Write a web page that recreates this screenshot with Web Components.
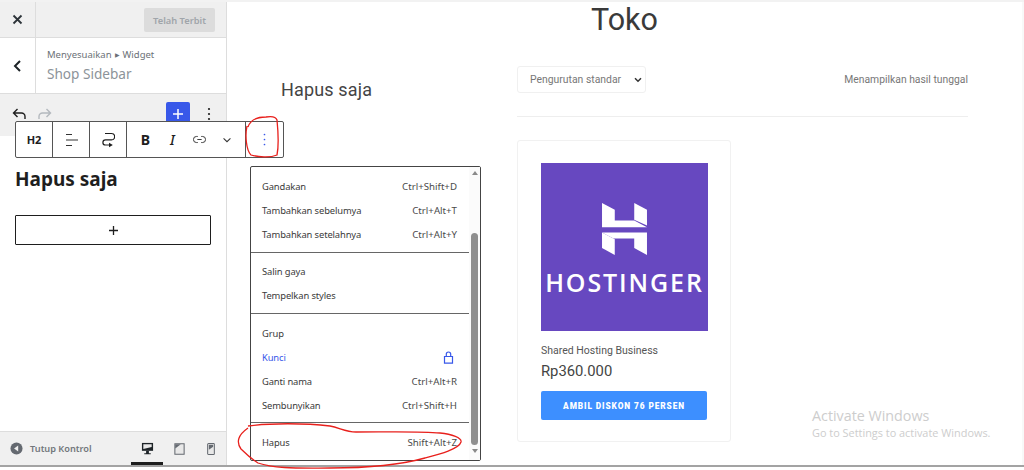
<!DOCTYPE html>
<html>
<head>
<meta charset="utf-8">
<style>
  html, body { margin: 0; height: 470px; overflow: hidden; background: #fff; }
</style>
</head>
<body>
<customizer-app></customizer-app>
<script>
const barTemplate = document.createElement('template');
barTemplate.innerHTML = `
  <style>
    :host { display: flex; width: 227px; flex: none; flex-direction: column; background: #fff; border-right: 1px solid #ddd; box-sizing: border-box; font-family: "Noto Sans", sans-serif; color: #1e1e1e; }
    .top { height: 35px; display: flex; background: #f0f0f0; border-bottom: 1px solid #ddd; flex: none; }
    .close { width: 35px; display: flex; align-items: center; justify-content: center; border-right: 1px solid #ddd; }
    .publish { margin: 6px 11px 0 auto; width: 71px; height: 24px; border-radius: 2px; background: #dcdcdc; color: #a0a5aa; font-size: 9.3px; font-weight: 600; display: flex; align-items: center; justify-content: center; }
    .panel { height: 55px; display: flex; border-bottom: 1px solid #ddd; flex: none; }
    .back { width: 35px; display: flex; align-items: center; justify-content: center; border-right: 1px solid #ddd; }
    .crumbs { padding: 9px 0 0 11px; font-size: 9.5px; color: #6b7177; line-height: 15px; }
    .crumbs b { font-weight: 400; font-size: 6px; margin: 0 3px; vertical-align: 1px; }
    .crumbs div { font-size: 13.6px; color: #8c9399; line-height: 20px; margin-top: 1px; }
    .tools { height: 42px; background: #f0f0f0; display: flex; align-items: flex-start; padding: 8px 0 0 11px; box-sizing: border-box; flex: none; }
    .tools svg { display: block; }
    .add { width: 24px; height: 24px; margin: 0 0 0 113px; border-radius: 2px; background: #3858e9; display: flex; align-items: center; justify-content: center; }
    .content { flex: 1; padding: 30px 15px 0 15px; }
    h2 { margin: 0; font-size: 19px; line-height: 26px; font-weight: 700; color: #1e1e1e; }
    .appender { margin-top: 23px; height: 30px; box-sizing: border-box; border: 1px solid #1e1e1e; display: flex; align-items: center; justify-content: center; border-radius: 1px; }
    .foot { height: 34px; flex: none; background: #f0f0f0; border-top: 1px solid #ddd; box-sizing: border-box; display: flex; align-items: center; font-size: 9.2px; font-weight: 600; color: #72777c; padding-left: 10px; }
    .foot span { margin-left: 7px; }
    .dev { width: 32px; height: 100%; display: flex; align-items: center; justify-content: center; box-sizing: border-box; border-bottom: 3px solid transparent; padding-top: 3px; }
    .dev.on { border-bottom-color: #1e1e1e; }
    .devs { margin-left: auto; margin-right: -1px; display: flex; height: 100%; }
  </style>
  <div class="top">
    <div class="close"><svg width="11" height="11" viewBox="0 0 11 11"><path d="M1.5 1.5l8 8M9.5 1.5l-8 8" stroke="#2c3338" stroke-width="1.8"/></svg></div>
    <div class="publish">Telah Terbit</div>
  </div>
  <div class="panel">
    <div class="back"><svg width="9" height="12" viewBox="0 0 9 12"><path d="M7 1L2 6l5 5" fill="none" stroke="#1d2327" stroke-width="2"/></svg></div>
    <div class="crumbs">Menyesuaikan<b>&#9654;</b>Widget<div>Shop Sidebar</div></div>
  </div>
  <div class="tools">
    <svg width="16" height="24" viewBox="0 0 16 24"><path d="M3 11h7.5a3.5 3.5 0 0 1 3.5 3.5V17M6.5 7L2.5 11l4 4" fill="none" stroke="#1e1e1e" stroke-width="1.4"/></svg>
    <svg style="margin-left:10px" width="16" height="24" viewBox="0 0 16 24"><path d="M13 11H5.5A3.5 3.5 0 0 0 2 14.5V17M9.5 7l4 4-4 4" fill="none" stroke="#b4b9be" stroke-width="1.4"/></svg>
    <div class="add"><svg width="12" height="12" viewBox="0 0 12 12"><path d="M6 1v10M1 6h10" stroke="#fff" stroke-width="1.5"/></svg></div>
    <svg style="margin:0 0 0 17px" width="4" height="24" viewBox="0 0 4 24"><circle cx="2" cy="7" r="1.1" fill="#1e1e1e"/><circle cx="2" cy="12" r="1.1" fill="#1e1e1e"/><circle cx="2" cy="17" r="1.1" fill="#1e1e1e"/></svg>
  </div>
  <div class="content">
    <h2>Hapus saja</h2>
    <div class="appender"><svg width="11" height="11" viewBox="0 0 11 11"><path d="M5.5 1v9M1 5.5h9" stroke="#1e1e1e" stroke-width="1.3"/></svg></div>
  </div>
  <div class="foot">
    <svg width="13" height="13" viewBox="0 0 14 14"><circle cx="7" cy="7" r="6.5" fill="#646970"/><path d="M8.8 3.8v6.4L4.4 7z" fill="#f0f0f0"/></svg>
    <span>Tutup Kontrol</span>
    <div class="devs">
      <div class="dev on"><svg width="13" height="13" viewBox="0 0 14 14"><path d="M1 1h12v8.5H1z" fill="#1d2327"/><path d="M2.5 2.5h9v3l-9 2z" fill="#e8e8e8"/><path d="M5.5 9.5h3V12h2v1.2h-7V12h2z" fill="#1d2327"/></svg></div>
      <div class="dev"><svg width="11" height="12" viewBox="0 0 12 14"><path d="M.6 1h10.8v12H.6z" fill="#e8e8e8" stroke="#646970" stroke-width="1.2"/><path d="M1 1.5h6.5L1 6.5z" fill="#646970"/></svg></div>
      <div class="dev"><svg width="8" height="12" viewBox="0 0 9 14"><rect x=".6" y=".6" width="7.8" height="12.8" rx="1" fill="#e8e8e8" stroke="#646970" stroke-width="1.2"/><path d="M2 2h5v2.5L2 8z" fill="#646970"/></svg></div>
    </div>
  </div>
`;
class WidgetBar extends HTMLElement {
  constructor() {
    super();
    this.attachShadow({ mode: 'open' }).appendChild(barTemplate.content.cloneNode(true));
  }
}
customElements.define('widget-bar', WidgetBar);

const toolbarTemplate = document.createElement('template');
toolbarTemplate.innerHTML = `
  <style>
    :host { position: absolute; left: 15px; top: 121px; height: 37px; width: 269px; box-sizing: border-box; display: flex; background: #fff; border: 1px solid #555; border-radius: 2px; font-family: "Noto Sans", sans-serif; color: #1e1e1e; }
    .cell { display: flex; align-items: center; justify-content: center; border-right: 1px solid #555; box-sizing: border-box; flex: none; }
    .h2 { width: 37px; font-size: 11px; font-weight: 700; }
    .w37 { width: 37px; }
    .fmt { width: 119px; padding-left: 5px; justify-content: flex-start; }
    .fmt > * { width: 27px; flex: none; display: flex; justify-content: center; }
    .b { font-size: 14px; font-weight: 700; }
    .i { font-size: 14px; font-weight: 500; font-style: italic; }
    .more { flex: 1; display: flex; align-items: center; justify-content: center; }
  </style>
  <div class="cell h2">H2</div>
  <div class="cell w37"><svg width="13" height="14" viewBox="0 0 13 14"><path d="M1 1.5h6M1 7h12M1 12.5h6" stroke="#333" stroke-width="1.1"/></svg></div>
  <div class="cell w37"><svg width="14" height="16" viewBox="0 0 14 16"><path d="M4 1.5h6.5a3 3 0 0 1 0 6.3H4.5a2.6 2.6 0 0 0 0 5.2H8" fill="none" stroke="#1e1e1e" stroke-width="1.2"/><path d="M8 10.8l3.8 2.2L8 15.2z" fill="#1e1e1e"/></svg></div>
  <div class="cell fmt">
    <span class="b">B</span>
    <span class="i">I</span>
    <span><svg width="13" height="9" viewBox="0 0 15 10"><path d="M5.5 1.5H4a3.5 3.5 0 0 0 0 7h1.5M9.5 1.5H11a3.5 3.5 0 0 1 0 7H9.5M5 5h5" fill="none" stroke="#333" stroke-width="1.1"/></svg></span>
    <span><svg width="10" height="6" viewBox="0 0 11 7"><path d="M1.5 1.5l4 4 4-4" fill="none" stroke="#333" stroke-width="1.2"/></svg></span>
  </div>
  <div class="more"><svg width="3" height="13" viewBox="0 0 3 13"><circle cx="1.5" cy="1.5" r=".85" fill="#3858e9"/><circle cx="1.5" cy="6.5" r=".85" fill="#3858e9"/><circle cx="1.5" cy="11.5" r=".85" fill="#3858e9"/></svg></div>
`;
class BlockToolbar extends HTMLElement {
  constructor() {
    super();
    this.attachShadow({ mode: 'open' }).appendChild(toolbarTemplate.content.cloneNode(true));
  }
}
customElements.define('block-toolbar', BlockToolbar);

const itemTemplate = document.createElement('template');
itemTemplate.innerHTML = `
  <style>
    :host { display: flex; height: 24px; align-items: center; justify-content: space-between; padding: 0 12px 0 11px; font-size: 9.4px; letter-spacing: -.12px; color: #3a3a3a; }
    :host([blue]) { color: #3858e9; }
    .key { color: #4a4a4a; font-size: 9.7px; letter-spacing: 0; display: flex; align-items: center; }
  </style>
  <slot></slot>
  <span class="key"><slot name="key"></slot></span>
`;
class MenuItem extends HTMLElement {
  constructor() {
    super();
    this.attachShadow({ mode: 'open' }).appendChild(itemTemplate.content.cloneNode(true));
  }
}
customElements.define('menu-item', MenuItem);

const menuTemplate = document.createElement('template');
menuTemplate.innerHTML = `
  <style>
    :host { position: absolute; left: 250px; top: 166px; width: 231px; height: 295px; box-sizing: border-box; display: flex; background: #fff; border: 1px solid #444; border-radius: 2px; font-family: "Noto Sans", sans-serif; }
    .list { flex: 1; padding-top: 7px; min-width: 0; }
    .track { width: 11px; flex: none; background: #fbfbfb; display: flex; flex-direction: column; align-items: center; padding: 4px 0; box-sizing: border-box; }
    .thumb { width: 7px; height: 212px; margin-top: 58px; background: #8f8f8f; border-radius: 4px; }
    .up, .down { width: 0; height: 0; border: 3.5px solid transparent; }
    .up { border-bottom: 4px solid #8a8a8a; border-top: 0; }
    .down { border-top: 4px solid #8a8a8a; border-bottom: 0; margin-top: 4px; }
  </style>
  <div class="list"><slot></slot></div>
  <div class="track"><div class="up"></div><div class="thumb"></div><div class="down"></div></div>
`;
class BlockMenu extends HTMLElement {
  constructor() {
    super();
    this.attachShadow({ mode: 'open' }).appendChild(menuTemplate.content.cloneNode(true));
  }
}
customElements.define('block-menu', BlockMenu);

const groupTemplate = document.createElement('template');
groupTemplate.innerHTML = `
  <style>
    :host { display: block; padding-bottom: 6px; margin-bottom: 6px; border-bottom: 1px solid #666; }
    :host([low]) { padding-top: 1px; padding-bottom: 5px; }
    :host(:last-child) { border-bottom: 0; margin-bottom: 0; }
  </style>
  <slot></slot>
`;
class MenuGroup extends HTMLElement {
  constructor() {
    super();
    this.attachShadow({ mode: 'open' }).appendChild(groupTemplate.content.cloneNode(true));
  }
}
customElements.define('menu-group', MenuGroup);

const cardTemplate = document.createElement('template');
cardTemplate.innerHTML = `
  <style>
    :host { display: block; width: 214px; height: 302px; box-sizing: border-box; margin-top: 23px; border: 1px solid #f1f1f1; border-radius: 3px; padding: 22px 23px 0; font-family: Roboto, sans-serif; }
    .pic { width: 167px; height: 168px; background: #6748c0; display: flex; flex-direction: column; align-items: center; padding-top: 40px; box-sizing: border-box; }
    .pic svg { display: block; width: 45px; height: 52px; }
    .brand { margin-top: 18px; height: 18px; color: #fff; font: 600 25px/18px "Open Sans", sans-serif; letter-spacing: 1.9px; white-space: nowrap; }
    .name { margin-top: 12px; font-size: 10.5px; line-height: 16px; color: #555; }
    .price { margin-top: 1px; font-size: 14.8px; line-height: 22px; color: #444; }
    .cta { margin-top: 9px; height: 29px; background: #3d8fff; border-radius: 2px; color: #fff; font-size: 8.3px; font-weight: 900; letter-spacing: .9px; display: flex; align-items: center; justify-content: center; }
  </style>
  <div class="pic">
    <svg viewBox="276 218 134 155"><path d="M276 218l38 20v32h58l38 20H276z" fill="#fff"/><path d="M372 218l38 20v47l-38-17z" fill="#fff"/><path d="M276 306l38 20v47l-38-21z" fill="#fff"/><path d="M276 306h134v67l-38-21v-28h-62z" fill="#fff"/></svg>
    <div class="brand">HOSTINGER</div>
  </div>
  <div class="name">Shared Hosting Business</div>
  <div class="price">Rp360.000</div>
  <div class="cta">AMBIL DISKON 76 PERSEN</div>
`;
class ProductCard extends HTMLElement {
  constructor() {
    super();
    this.attachShadow({ mode: 'open' }).appendChild(cardTemplate.content.cloneNode(true));
  }
}
customElements.define('product-card', ProductCard);

const shopTemplate = document.createElement('template');
shopTemplate.innerHTML = `
  <style>
    :host { display: flex; flex-direction: column; flex: 1; min-width: 0; background: #fff; font-family: Roboto, sans-serif; color: #444; border-right: 2px solid #f8f8f8; box-sizing: border-box; }
    h1 { margin: 0; text-align: center; font-size: 30.5px; font-weight: 400; line-height: 36px; color: #3a3a3a; }
    .cols { display: flex; padding: 28px 0 0 54px; }
    .side { width: 236px; flex: none; font-size: 18px; line-height: 24px; padding-top: 12px; letter-spacing: .15px; color: #444; }
    .shop { width: 451px; flex: none; }
    .order { display: flex; justify-content: space-between; align-items: center; padding-bottom: 23px; border-bottom: 1px solid #eee; }
    .sel { width: 129px; height: 27px; box-sizing: border-box; border: 1px solid #f0f0f0; border-radius: 3px; padding: 0 3px 0 12px; display: flex; align-items: center; justify-content: space-between; font-size: 10.4px; color: #777; }
    .count { font-size: 10.35px; color: #777; }
  </style>
  <h1>Toko</h1>
  <div class="cols">
    <div class="side">Hapus saja</div>
    <div class="shop">
      <div class="order">
        <div class="sel">Pengurutan standar<svg width="8" height="6" viewBox="0 0 8 6"><path d="M1 1.2l3 3 3-3" fill="none" stroke="#333" stroke-width="1.5"/></svg></div>
        <div class="count">Menampilkan hasil tunggal</div>
      </div>
      <product-card></product-card>
    </div>
  </div>
`;
class ShopPage extends HTMLElement {
  constructor() {
    super();
    this.attachShadow({ mode: 'open' }).appendChild(shopTemplate.content.cloneNode(true));
  }
}
customElements.define('shop-page', ShopPage);

const appTemplate = document.createElement('template');
appTemplate.innerHTML = `
  <style>
    :host { display: flex; flex-direction: column; position: relative; width: 1024px; height: 470px; overflow: hidden; background: #fff; }
    .stripe { height: 2px; background: #f2f2f2; flex: none; }
    .frame { height: 463px; display: flex; flex: none; }
    .edge { height: 2px; background: #a3a3a3; flex: none; }
    .ink { position: absolute; left: 0; top: 0; pointer-events: none; }
    .activate { position: absolute; left: 812px; top: 407px; font-family: "Open Sans", sans-serif; color: #cdcdcd; font-size: 14.3px; line-height: 18px; }
    .activate div { font-size: 10.9px; line-height: 16px; }
    menu-item svg { display: block; margin-right: 3px; }
  </style>
  <div class="stripe"></div>
  <div class="frame">
    <widget-bar></widget-bar>
    <shop-page></shop-page>
  </div>
  <div class="edge"></div>
  <block-toolbar></block-toolbar>
  <block-menu>
    <menu-group>
      <menu-item>Gandakan<span slot="key">Ctrl+Shift+D</span></menu-item>
      <menu-item>Tambahkan sebelumya<span slot="key">Ctrl+Alt+T</span></menu-item>
      <menu-item>Tambahkan setelahnya<span slot="key">Ctrl+Alt+Y</span></menu-item>
    </menu-group>
    <menu-group>
      <menu-item>Salin gaya</menu-item>
      <menu-item>Tempelkan styles</menu-item>
    </menu-group>
    <menu-group low>
      <menu-item>Grup</menu-item>
      <menu-item blue>Kunci<svg slot="key" width="11" height="13" viewBox="0 0 10 13"><path d="M1 5.5h8v6.7H1zM2.8 5.5V3.2a2.2 2.2 0 0 1 4.4 0v2.3" fill="none" stroke="#3858e9" stroke-width="1.2"/></svg></menu-item>
      <menu-item>Ganti nama<span slot="key">Ctrl+Alt+R</span></menu-item>
      <menu-item>Sembunyikan<span slot="key">Ctrl+Shift+H</span></menu-item>
    </menu-group>
    <menu-group low>
      <menu-item>Hapus<span slot="key">Shift+Alt+Z</span></menu-item>
    </menu-group>
  </block-menu>
  <div class="activate">Activate Windows<div>Go to Settings to activate Windows.</div></div>
  <svg class="ink" width="1024" height="470" viewBox="0 0 1024 470" fill="none" stroke="#e8201c" stroke-width="1.3">
    <path d="M248 127C250 121 256 117 266 117C272 116 276 117 277 120C278 130 279 145 277 155C270 158 258 157 251 155C246 150 245 135 247 126"/>
    <path d="M248 426C270 423 305 423 330 426C340 428 346 432 356 432C385 432 420 431 440 433C452 434 462 438 461 442C459 449 440 454 425 458C400 465 370 468 330 468C300 468 275 469 258 463C250 458 246 454 241 449C236 442 238 435 248 428"/>
  </svg>
`;
class CustomizerApp extends HTMLElement {
  constructor() {
    super();
    this.attachShadow({ mode: 'open' }).appendChild(appTemplate.content.cloneNode(true));
  }
}
customElements.define('customizer-app', CustomizerApp);
</script>
</body>
</html>
